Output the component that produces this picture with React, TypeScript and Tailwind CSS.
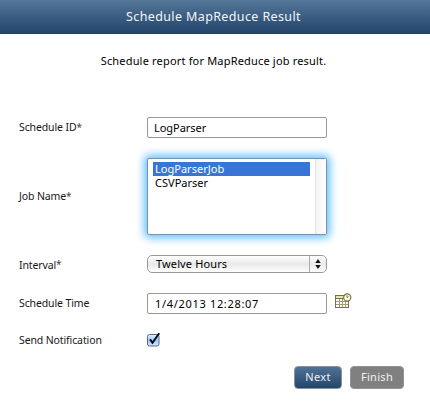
import type { ReactNode } from "react";

function Row({ label, required, className, children }: { label: ReactNode; required?: boolean; className: string; children: ReactNode }) {
  return (
    <div className={`flex items-center ${className}`}>
      <div className="w-32 shrink-0 pb-px text-[10.5px] leading-4 tracking-[-0.12px] whitespace-nowrap text-[#161616]">
        {label}
        {required && <span className="text-[10px] text-[#444]">*</span>}
      </div>
      {children}
    </div>
  );
}

function CalendarIcon() {
  return (
    <svg width="17" height="16" viewBox="0 0 17 16">
      <rect x=".5" y="2.500" width="13" height="12" fill="#fff" stroke="#77753c" />
      <path d="M1 3h12v2H1z" fill="#e4e2c0" />
      <path d="M0 5.500h14" stroke="#77753c" />
      <path d="M4.500 6v8M7.500 6v8M10.500 6v8M1 8.500h12M1 11.500h12" stroke="#a19f72" fill="none" />
      <circle cx="12.200" cy="4.500" r="3.600" fill="#fdfdf2" stroke="#77753c" strokeWidth="1.200" />
      <path d="M12 2.300v2.400l1.500-1.200" stroke="#66643a" strokeWidth=".9" fill="none" />
    </svg>
  );
}

export default function App() {
  return (
    <div className="h-[415px] w-[430px] overflow-hidden bg-white font-['Noto_Sans','Open_Sans',sans-serif] text-black">
      <header className="flex h-[34px] items-center justify-center border-b border-[#1d4067] bg-linear-to-b from-[#557799] to-[#23456b] text-[12.5px] tracking-[0.38px] text-[#f3f6f9]">
        <span className="pt-[2px] pr-[3px]">Schedule MapReduce Result</span>
      </header>
      <p className="pt-[18px] pr-[3px] text-center text-[11px] leading-[18px] tracking-[0.18px]">Schedule report for MapReduce job result.</p>

      <div className="pt-[47px] pl-[19px]">
        <Row label="Schedule ID" required className="h-[21px]">
          <div className="flex h-[21px] w-[180px] items-center rounded-[2px] border border-[#999] px-[6px] pt-px text-[11px] tracking-[-0.05px]">LogParser</div>
        </Row>
        <Row label="Job Name" required className="mt-5 h-[77px]">
          <div className="flex h-[77px] w-[180px] justify-between rounded-[2px] border border-[#7793aa] bg-white pl-[5px] text-[11px] tracking-[0.02px] shadow-[0_0_9px_3px_#66c0ff]">
            <div className="w-[157px] pt-[3px] leading-[14px]">
              <div className="h-[14px] bg-[#3875d7] pl-[2px] text-white">LogParserJob</div>
              <div className="h-[14px] pl-[2px]">CSVParser</div>
            </div>
            <div className="w-[11px] border-l border-[#e3e3e3] bg-linear-to-r from-[#f4f4f4] to-white" />
          </div>
        </Row>
        <Row label={<span className="relative top-px">Interval</span>} required className="mt-5 h-[18px]">
          <div className="flex h-[18px] w-[180px] items-center justify-between rounded-[5px] border border-[#999] bg-linear-to-b from-[#fff] via-[#e9e9e9] to-[#fdfdfd] pl-2 text-[11px] tracking-[0.13px]">
            <span>Twelve Hours</span>
            <span className="flex h-4 w-[17px] items-center justify-center border-l border-[#aaa]">
              <svg width="6" height="10" viewBox="0 0 6 10"><path d="M.3 4 3 0l2.700 4zM.3 6h5.400L3 10z" fill="#111" /></svg>
            </span>
          </div>
        </Row>
        <Row label="Schedule Time" className="mt-5 h-[21px]">
          <div className="flex h-[21px] w-[180px] items-center rounded-[2px] border border-[#999] px-[7px] pt-px text-[11px] tracking-[0.68px]">1/4/2013 12:28:07</div>
          <div className="mb-[5px] ml-2"><CalendarIcon /></div>
        </Row>
        <Row label="Send Notification" className="mt-[17px] h-[18px]">
          <svg className="mb-px" width="15" height="16" viewBox="0 0 15 16">
            <defs>
              <linearGradient id="check-face" x2="0" y2="1">
                <stop stopColor="#e5f0fd" /><stop offset=".5" stopColor="#a3caf3" /><stop offset="1" stopColor="#d0ecff" />
              </linearGradient>
            </defs>
            <rect x=".5" y="2.500" width="11.500" height="11.500" rx="2" fill="url(#check-face)" stroke="#586694" />
            <path d="M3 7.300 5.500 10.800 12.200 1.200" fill="none" stroke="#050b19" strokeWidth="2" />
          </svg>
        </Row>
      </div>

      <div className="mt-[17px] flex justify-end gap-2 pr-[26px] text-[11px] tracking-[0.3px] text-[#f2f2f2]">
        <div className="flex h-[23px] w-12 items-center justify-center rounded-[4px] border border-[#8a929a] bg-linear-to-b from-[#4f7397] to-[#23466b]">Next</div>
        <div className="flex h-[23px] w-[54px] items-center justify-center rounded-[4px] border border-[#929292] bg-[#808080]">Finish</div>
      </div>
    </div>
  );
}
